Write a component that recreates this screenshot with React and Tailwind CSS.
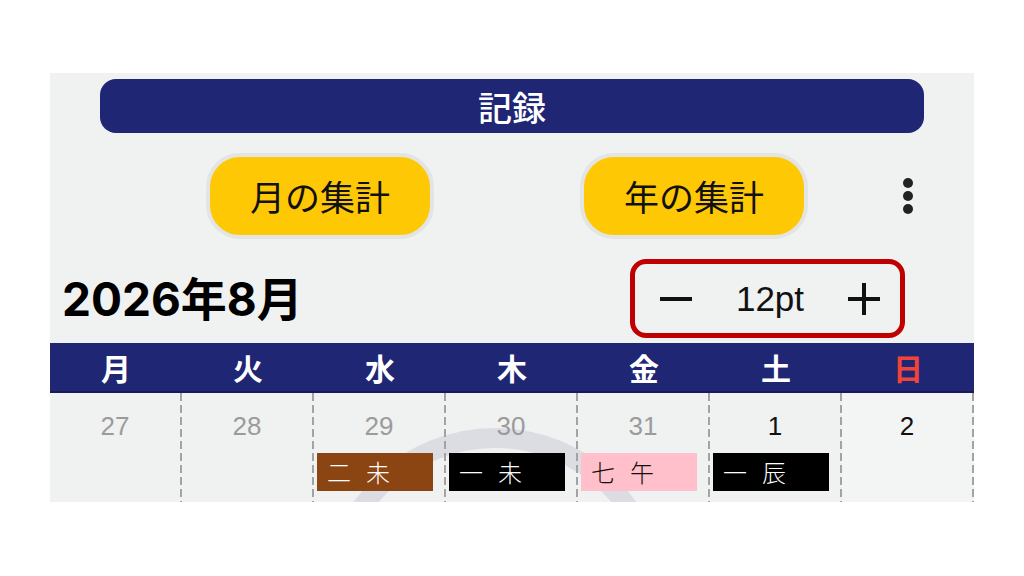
import React from 'react'

const days = [
  { label: '月' },
  { label: '火' },
  { label: '水' },
  { label: '木' },
  { label: '金' },
  { label: '土' },
  { label: '日', sunday: true },
]

const cells = [
  { n: 27, other: true },
  { n: 28, other: true },
  { n: 29, other: true, tag: ['二', '未'], bg: 'bg-[#8b4513]', fg: 'text-white' },
  { n: 30, other: true, tag: ['一', '未'], bg: 'bg-black', fg: 'text-white' },
  { n: 31, other: true, tag: ['七', '午'], bg: 'bg-[#ffc0cb]', fg: 'text-[#111]' },
  { n: 1, tag: ['一', '辰'], bg: 'bg-black', fg: 'text-white' },
  { n: 2 },
]

const jp = { fontFamily: '"Noto Sans CJK JP", "Liberation Sans", sans-serif' }
const num = { fontFamily: '"Liberation Sans", "Noto Sans CJK JP", sans-serif' }

function YellowButton({ children }) {
  return (
    <button
      className="w-[228px] h-[86px] rounded-[34px] border-[4px] border-[#e3e4e4] bg-[#ffc805] text-[35px] text-[#111] flex items-center justify-center"
      style={jp}
    >
      {children}
    </button>
  )
}

export default function App() {
  return (
    <div className="w-[1024px] h-[576px] bg-white pt-[73px] pl-[50px]">
      <div className="relative w-[924px] h-[429px] bg-[#f0f1f1] overflow-hidden flex flex-col">
        {/* watermark ring */}
        <svg className="absolute left-0 top-0" width="924" height="429">
          <circle cx="445" cy="527" r="162" fill="none" stroke="#dcdde3" strokeWidth="20" />
        </svg>

        <div className="relative flex flex-col">
          {/* title bar */}
          <div
            className="mt-[6px] mx-[50px] h-[54px] rounded-[16px] bg-[#1f2673] flex items-center justify-center text-white text-[34px] font-medium"
            style={jp}
          >
            記録
          </div>

          {/* summary buttons */}
          <div className="mt-[20px] h-[86px] flex items-center pl-[156px]">
            <YellowButton>月の集計</YellowButton>
            <div className="ml-[146px]">
              <YellowButton>年の集計</YellowButton>
            </div>
            <div className="ml-[95px] flex flex-col gap-[3px]">
              <span className="w-[10px] h-[10px] rounded-full bg-[#222]" />
              <span className="w-[10px] h-[10px] rounded-full bg-[#222]" />
              <span className="w-[10px] h-[10px] rounded-full bg-[#222]" />
            </div>
          </div>

          {/* month + font size */}
          <div className="mt-[20px] h-[79px] flex items-center">
            <div
              className="ml-[12px] w-[568px] text-[46px] font-bold text-black leading-none"
              style={{ fontFamily: '"Inter", "Noto Sans CJK JP", sans-serif' }}
            >
              2026年8月
            </div>
            <div className="w-[275px] h-[79px] rounded-[16px] border-[5px] border-[#c00000] flex items-center justify-between pl-[25px] pr-[20px]">
              <svg width="32" height="32" viewBox="0 0 32 32">
                <rect x="0" y="14" width="32" height="4" fill="#111" />
              </svg>
              <span className="text-[35px] text-[#111] leading-none" style={num}>
                12pt
              </span>
              <svg width="32" height="32" viewBox="0 0 32 32">
                <rect x="0" y="14" width="32" height="4" fill="#111" />
                <rect x="14" y="0" width="4" height="32" fill="#111" />
              </svg>
            </div>
          </div>

          {/* weekday header */}
          <div className="mt-[5px] h-[50px] bg-[#1f2673] border-b-2 border-[#161b5c] grid grid-cols-7">
            {days.map((d) => (
              <div
                key={d.label}
                className={`flex items-center justify-center text-[30px] font-bold ${d.sunday ? 'text-[#f0443a]' : 'text-white'}`}
                style={jp}
              >
                {d.label}
              </div>
            ))}
          </div>

          {/* days */}
          <div className="h-[109px] grid grid-cols-7">
            {cells.map((c, i) => (
              <div key={i} className={`flex ${i === 6 ? 'bg-[#f3f4f4]' : ''}`}>
                <div className="flex-1 flex flex-col">
                  <div
                    className={`mt-[18px] h-[30px] flex items-center justify-center text-[26px] ${c.other ? 'text-[#9b9b9b]' : 'text-[#111]'}`}
                    style={num}
                  >
                    {c.n}
                  </div>
                  {c.tag && (
                    <div
                      className={`mt-[12px] ml-[3px] w-[116px] h-[38px] flex items-center gap-[15px] pl-[10px] text-[24px] font-light ${c.bg} ${c.fg}`}
                      style={jp}
                    >
                      <span>{c.tag[0]}</span>
                      <span>{c.tag[1]}</span>
                    </div>
                  )}
                </div>
                <div className="w-[2px] h-full bg-[repeating-linear-gradient(to_bottom,#a3a3a3_0px,#a3a3a3_8px,transparent_8px,transparent_12px)]" />
              </div>
            ))}
          </div>
        </div>
      </div>
    </div>
  )
}
